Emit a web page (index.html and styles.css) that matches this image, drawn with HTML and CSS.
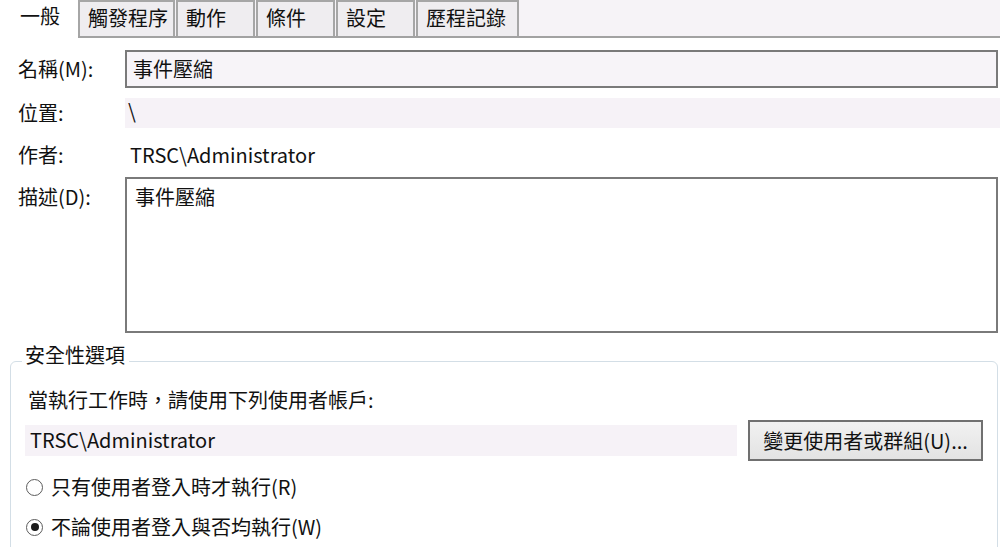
FILE: index.html
```html
<!DOCTYPE HTML>
<html lang="zh-Hant">
  <head>
    <title>事件壓縮 內容</title>
    <meta charset="utf-8">
    <link rel="stylesheet" href="styles.css">
  </head>
  <body>

  <div class="tabs">
    <span class="tab active">一般</span>
    <span class="tab tab-w1">觸發程序</span>
    <span class="tab tab-w2">動作</span>
    <span class="tab tab-w2">條件</span>
    <span class="tab tab-w2">設定</span>
    <span class="tab tab-w3">歷程記錄</span>
  </div>

  <div class="row row-name">
    <span class="label">名稱(M):</span>
    <div class="field boxed">事件壓縮</div>
  </div>

  <div class="row row-loc">
    <span class="label">位置:</span>
    <div class="field plain">\</div>
  </div>

  <div class="row row-author">
    <span class="label">作者:</span>
    <div class="value">TRSC\Administrator</div>
  </div>

  <div class="row row-desc">
    <span class="label">描述(D):</span>
    <div class="field desc">事件壓縮</div>
  </div>

  <fieldset class="group">
    <legend>安全性選項</legend>

    <div class="hint">當執行工作時，請使用下列使用者帳戶:</div>

    <div class="user-row">
      <div class="user-field">TRSC\Administrator</div>
      <span class="button">變更使用者或群組(U)...</span>
    </div>

    <div class="radio">
      <span class="dot"></span>
      <span>只有使用者登入時才執行(R)</span>
    </div>
    <div class="radio checked">
      <span class="dot"></span>
      <span>不論使用者登入與否均執行(W)</span>
    </div>
  </fieldset>

  </body>
</html>
```

FILE: styles.css
```css
html {
  height: 100%;
  overflow: hidden;
}
body {
  margin: 0;
  padding: 0;
  background: #ffffff;
  color: #111111;
  font-family: "Noto Sans CJK TC", "Open Sans", sans-serif;
  font-size: 20px;
  line-height: 24px;
}

/* tab strip */
.tabs {
  display: flex;
  align-items: flex-end;
  height: 36px;
  background: #f6f3f7;
  border-bottom: 2px solid #a2a2a2;
}

.tab {
  box-sizing: border-box;
  height: 36px;
  padding: 4px 0 0 8px;
  background: #efedf0;
  border: 2px solid #a6a6a6;
  border-bottom: none;
  margin-right: 1px;
}

.tab.active {
  width: 78px;
  height: 38px;
  margin: 0 0 -2px 0;
  padding: 4px 0 0 20px;
  background: #ffffff;
  border: none;
}

.tab-w1 { width: 97px; }
.tab-w2 { width: 79px; }
.tab-w3 { width: 103px; }

/* form rows */
.row {
  display: flex;
  align-items: center;
}

.label {
  width: 125px;
  flex: none;
  box-sizing: border-box;
  padding-left: 18px;
}

.row-name { margin-top: 12px; height: 38px; }
.row-loc { margin-top: 10px; height: 30px; }
.row-author { margin-top: 12px; height: 30px; }
.row-desc {
  margin-top: 7px;
  height: 156px;
  align-items: flex-start;
}
.row-desc .label { padding-top: 8px; }

.field {
  flex: 1;
  box-sizing: border-box;
  height: 100%;
}

.boxed {
  margin-right: 2px;
  padding: 5px 0 0 6px;
  background: #f7f4f8;
  border: 2px solid #7a7a7a;
}

.plain {
  padding: 1px 0 0 3px;
  background: #f6f2f7;
}

.value { padding-left: 5px; }

.desc {
  margin-right: 2px;
  padding: 6px 0 0 8px;
  background: #ffffff;
  border: 2px solid #7a7a7a;
}

/* security group, runs on below the window */
.group {
  margin: 10px 2px 0 10px;
  padding: 0 0 0 14px;
  border: 1px solid #d3dee6;
  border-radius: 6px;
  height: 240px;
}

.group legend {
  margin-left: -3px;
  padding: 0 4px 12px 3px;
}

.hint {
  margin-top: 9px;
  padding-left: 3px;
}

.user-row {
  display: flex;
  align-items: center;
  margin-top: 8px;
  height: 41px;
}

.user-field {
  width: 712px;
  height: 31px;
  box-sizing: border-box;
  padding: 3px 0 0 5px;
  background: #f6f2f7;
}

.button {
  box-sizing: border-box;
  width: 235px;
  height: 41px;
  margin-left: 11px;
  padding-top: 7px;
  text-align: center;
  background: linear-gradient(#f1f1f1, #e3e3e3);
  border: 2px solid #707070;
}

.radio {
  display: flex;
  align-items: center;
  height: 24px;
  margin-top: 14px;
  padding-left: 1px;
}
.radio + .radio { margin-top: 16px; }

.dot {
  box-sizing: border-box;
  width: 17px;
  height: 17px;
  margin-right: 8px;
  border: 1.5px solid #5c5c5c;
  border-radius: 50%;
  background: #ffffff;
  display: flex;
  align-items: center;
  justify-content: center;
}

.checked .dot::after {
  content: "";
  width: 8px;
  height: 8px;
  border-radius: 50%;
  background: #1a1a1a;
}
```
